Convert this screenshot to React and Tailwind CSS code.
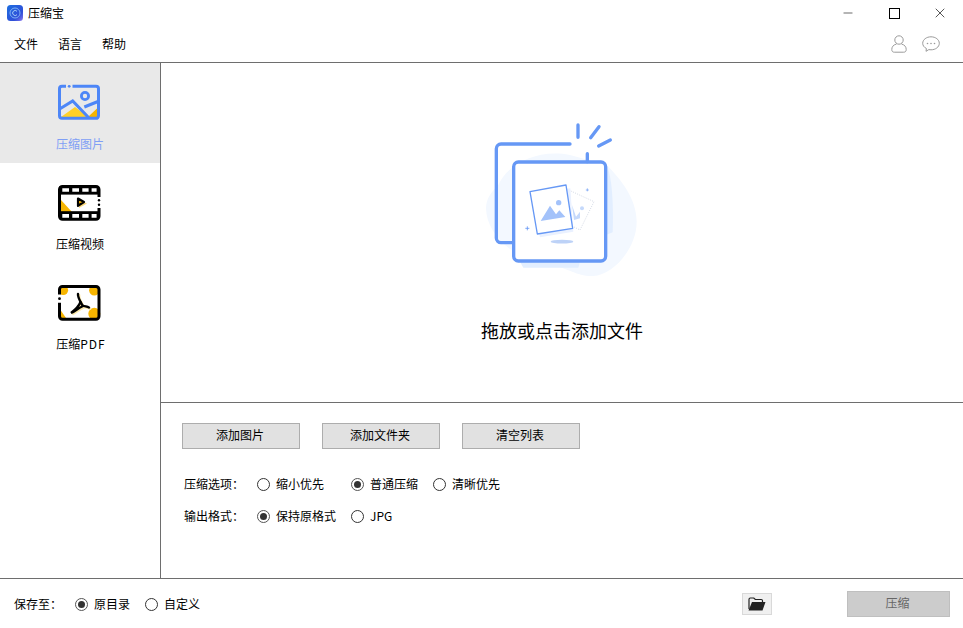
import { Minus, X } from 'lucide-react'

const FONT = "font-['Noto_Sans_CJK_SC','Noto_Sans',sans-serif]"

function AppLogo() {
  return (
    <svg width="16" height="16" viewBox="0 0 16 16">
      <defs>
        <linearGradient id="logo" x1="0" y1="0" x2="1" y2="1">
          <stop offset="0" stopColor="#1d6fe0" />
          <stop offset="0.7" stopColor="#2f4fd8" />
          <stop offset="1" stopColor="#8f7cf0" />
        </linearGradient>
      </defs>
      <rect width="16" height="16" rx="3.5" fill="url(#logo)" />
      <circle cx="8" cy="8" r="5" fill="none" stroke="#7fb2f5" strokeWidth="1" />
      <path d="M10 6.3a2.5 2.5 0 1 0 0 3.4" fill="none" stroke="#a9cdf8" strokeWidth="1" />
    </svg>
  )
}

function ImageIcon() {
  return (
    <svg width="44" height="37" viewBox="0 0 44 37">
      <path d="M3 33 L17 23 L30.300 33 Z" fill="#ffd02a" />
      <path d="M31 32 L39 24.500 V33.300 H31 Z" fill="#f5b400" />
      <path d="M8 2.300H4a2.500 2.500 0 0 0-2.500 2.500v27a2.500 2.500 0 0 0 2.500 2.500h34a2.500 2.500 0 0 0 2.500-2.500v-27a2.500 2.500 0 0 0-2.500-2.500H14.500" fill="none" stroke="#4d86f7" strokeWidth="3" />
      <circle cx="11.200" cy="2.300" r="1.400" fill="#4d86f7" />
      <circle cx="27" cy="12" r="3.600" fill="none" stroke="#4d86f7" strokeWidth="2.800" />
      <path d="M2 24.700 L14.700 17 L31 34" fill="none" stroke="#4d86f7" strokeWidth="3" />
      <path d="M26.300 23 L40 17.500" fill="none" stroke="#4d86f7" strokeWidth="3" />
    </svg>
  )
}

function VideoIcon() {
  return (
    <svg width="44" height="37" viewBox="0 0 44 37">
      <path d="M3 16 L14 28 H3 Z" fill="#f7b500" />
      <path d="M41 13V5.400a3 3 0 0 0-3-3H4.500a3 3 0 0 0-3 3v26.900a3 3 0 0 0 3 3H38a3 3 0 0 0 3-3V24" fill="none" stroke="#000" strokeWidth="3" />
      <rect x="1.500" y="2" width="39.500" height="8.600" fill="#000" />
      <rect x="1.500" y="27.200" width="39.500" height="8" fill="#000" />
      <path d="M4.300 4.300h6.700v3.400H4.300z M14.300 4.300h6.700v3.400h-6.700z M24.300 4.300h6.300v3.400h-6.300z M33.600 4.300h5v3.400h-5z M4.300 30h6.700v3.700H4.300z M14.300 30h6.700v3.700h-6.700z M24.300 30h6.300v3.700h-6.300z M33.600 30h5v3.700h-5z" fill="#fff" />
      <path d="M21 16 L29 19.500 L21 24Z" fill="#fbd87a" />
      <path d="M20 14.500 L26 18 L20 21.800Z" fill="#f7b500" stroke="#000" strokeWidth="2.200" strokeLinejoin="round" />
      <circle cx="41" cy="16.300" r="1.200" fill="#000" />
      <circle cx="41" cy="20.700" r="1.200" fill="#000" />
    </svg>
  )
}

function PdfIcon() {
  return (
    <svg width="44" height="37" viewBox="0 0 44 37">
      <circle cx="5.300" cy="6.300" r="4.800" fill="#f7b500" />
      <circle cx="36.300" cy="6.300" r="5.200" fill="#f7b500" />
      <circle cx="36.300" cy="29.700" r="6" fill="#f7b500" />
      <path d="M2.500 26 L8 34 H2.500 Z" fill="#f7b500" />
      <path d="M1.500 10.500V5.400a3 3 0 0 1 3-3H38a3 3 0 0 1 3 3v26.900a3 3 0 0 1-3 3H4.500a3 3 0 0 1-3-3V18.700" fill="none" stroke="#000" strokeWidth="3" />
      <circle cx="1.500" cy="14.700" r="1.400" fill="#000" />
      <g fill="none" strokeLinecap="round" strokeWidth="2.400">
        <g stroke="#fce9a9" transform="translate(1.200 1.200)">
          <path d="M20 10C19.500 13 22 17 24.500 21.500 27 22.500 29 22.500 31 23.500" />
          <path d="M22.500 18C21 22 17 26 13 29 17 27 20 24.500 25 22" />
        </g>
        <g stroke="#000">
          <path d="M20 10C19.500 13 22 17 24.500 21.500 27 22.500 29 22.500 31 23.500" />
          <path d="M22.500 18C21 22 17 26 13 29 17 27 20 24.500 25 22" />
        </g>
      </g>
    </svg>
  )
}

function HeroArt() {
  return (
    <svg className="w-[180px] h-[170px]" viewBox="6 0 540 510">
      <path d="M85 210 C110 150 200 100 300 120 L410 150 C450 190 500 250 500 320 C500 400 430 480 370 483 C320 485 300 460 240 450 C150 440 50 370 48 280 C48 250 65 230 85 210Z" fill="#f3f8ff" />
      <path d="M412 155 C430 200 430 300 428 352 L408 360 L400 420 L330 440 L325 458 L160 458 L150 440 L400 435Z" fill="#e2eeff" />
      <path d="M300 87H93a14 14 0 0 0-14 14v268a14 14 0 0 0 14 14h36" fill="none" stroke="#6698f5" strokeWidth="10" strokeLinecap="round" />
      <rect x="131" y="141" width="276" height="297" rx="14" fill="#fff" stroke="#6698f5" strokeWidth="10" />
      <path d="M352 116V140 M324 30V67 M362 68L387 35 M386 93L421 75" stroke="#6698f5" strokeWidth="10" strokeLinecap="round" />
      <path d="M296 225 L372 260 L330 345 L300 330Z" fill="#fff" stroke="#bcc6d6" strokeWidth="2" strokeDasharray="3 4" />
      <path d="M306 270 L318 305 L330 290 L330 310 L312 315Z" fill="#c5d9fb" />
      <circle cx="336" cy="280" r="6" fill="#c5d9fb" />
      <path d="M205 362 L305 345 L296 215 L181 232Z" fill="#eaf1ff" transform="translate(5 5)" />
      <path d="M180 230 L288 210 L308 340 L202 357Z" fill="#fff" stroke="#6698f5" strokeWidth="4" strokeLinejoin="round" />
      <path d="M212 318 L240 272 L258 298 L268 286 L286 306Z" fill="#a3c2fa" />
      <circle cx="266" cy="263" r="8" fill="#a3c2fa" />
      <ellipse cx="276" cy="380" rx="34" ry="5.500" fill="#bdd2f7" />
      <path d="M172 334V346 M166 340H178" stroke="#6698f5" strokeWidth="2.500" />
      <path d="M352 220V229 M347.500 225H356.500" stroke="#6698f5" strokeWidth="2" />
    </svg>
  )
}

function Radio({ label, checked }) {
  return (
    <span className="flex items-center">
      <span className={`w-[13px] h-[13px] rounded-full border bg-white flex items-center justify-center shrink-0 ${checked ? 'border-[#555]' : 'border-[#333]'}`}>
        {checked && <span className="w-[7px] h-[7px] rounded-full bg-[#333]" />}
      </span>
      <span className="ml-[6px] text-xs text-black whitespace-nowrap">{label}</span>
    </span>
  )
}

function ActionButton({ children }) {
  return (
    <button type="button" className="w-[118px] h-[26px] pr-[2px] pb-[2px] bg-[#e1e1e1] border border-[#adadad] text-xs text-black">
      {children}
    </button>
  )
}

const NAV = [
  { label: '压缩图片', Icon: ImageIcon, active: true },
  { label: '压缩视频', Icon: VideoIcon },
  { label: <span className="pl-[2px]">压缩<span className="tracking-[1px]">PDF</span></span>, Icon: PdfIcon },
]

export default function App() {
  return (
    <div className={`w-[963px] h-[628px] bg-white flex flex-col overflow-hidden ${FONT}`}>
      {/* title bar */}
      <div className="h-[26px] flex items-center pl-[7px] shrink-0">
        <AppLogo />
        <span className="ml-[5px] text-xs text-black">压缩宝</span>
        <div className="ml-auto flex items-center text-black">
          <span className="w-[46px] flex justify-center"><Minus size={14} strokeWidth={1} /></span>
          <span className="w-[46px] flex justify-center">
            <span className="w-[11px] h-[11px] border border-black" />
          </span>
          <span className="w-[46px] flex justify-center"><X size={16} strokeWidth={1} /></span>
        </div>
      </div>

      {/* menu row */}
      <div className="h-[36px] border-b border-[#6e6e6e] flex items-center pl-[14px] pr-[23px] gap-5 text-xs text-black shrink-0 box-content">
        <span>文件</span>
        <span>语言</span>
        <span>帮助</span>
        <div className="ml-auto flex items-center gap-[15px]">
          <svg width="16" height="18" viewBox="0 0 16 18" fill="none" stroke="#9a9a9a" strokeWidth="1">
            <circle cx="8" cy="5" r="4.200" />
            <path d="M5.500 9C2 10 .8 12 .8 14.500c0 2 1 2.700 2.500 2.700h9.400c1.500 0 2.500-.7 2.500-2.700 0-2.500-1.200-4.500-4.700-5.500" />
          </svg>
          <svg width="18" height="16" viewBox="0 0 18 16" fill="none" stroke="#9a9a9a" strokeWidth="1">
            <path d="M9 .8c4.500 0 8.300 2.800 8.300 6.500s-3.800 6.500-8.300 6.500c-.8 0-1.500-.1-2.200-.2L4 15.300l.4-2.800C2 11.300.7 9.400.7 7.300.7 3.600 4.500.8 9 .8z" />
            <circle cx="5.500" cy="7.500" r=".8" fill="#9a9a9a" stroke="none" />
            <circle cx="9" cy="7.500" r=".8" fill="#9a9a9a" stroke="none" />
            <circle cx="12.500" cy="7.500" r=".8" fill="#9a9a9a" stroke="none" />
          </svg>
        </div>
      </div>

      {/* body */}
      <div className="flex flex-1 min-h-0">
        <div className="w-[161px] border-r border-[#6e6e6e] shrink-0">
          {NAV.map(({ label, Icon, active }, i) => (
            <div key={i} className={`h-[100px] flex flex-col items-center pt-[21px] ${active ? 'bg-[#e9e9e9]' : ''}`}>
              <Icon />
              <span className={`mt-[15px] text-xs ${active ? 'text-[#7f9ff5]' : 'text-black'}`}>{label}</span>
            </div>
          ))}
        </div>

        <div className="flex-1 flex flex-col min-w-0">
          {/* drop zone */}
          <div className="h-[340px] border-b border-[#6e6e6e] flex flex-col items-center pt-[52px] shrink-0">
            <HeroArt />
            <span className="mt-[32px] text-[18px] leading-[26px] text-black">拖放或点击添加文件</span>
          </div>

          {/* options */}
          <div className="flex-1 pl-[21px] pt-[20px]">
            <div className="flex gap-[22px]">
              <ActionButton>添加图片</ActionButton>
              <ActionButton>添加文件夹</ActionButton>
              <ActionButton>清空列表</ActionButton>
            </div>
            <div className="flex items-center h-[18px] mt-[26px] pl-[2px]">
              <span className="w-[73px] text-xs text-black">压缩选项：</span>
              <span className="w-[94px]"><Radio label="缩小优先" /></span>
              <span className="w-[82px]"><Radio label="普通压缩" checked /></span>
              <Radio label="清晰优先" />
            </div>
            <div className="flex items-center h-[18px] mt-[14px] pl-[2px]">
              <span className="w-[73px] text-xs text-black">输出格式：</span>
              <span className="w-[94px]"><Radio label="保持原格式" checked /></span>
              <Radio label="JPG" />
            </div>
          </div>
        </div>
      </div>

      {/* footer */}
      <div className="h-[50px] border-t border-[#6e6e6e] flex items-center pl-[14px] pr-[13px] shrink-0">
        <span className="w-[61px] mt-[1px] text-xs text-black">保存至：</span>
        <span className="w-[70px] mt-[1px]"><Radio label="原目录" checked /></span>
        <span className="mt-[1px]"><Radio label="自定义" /></span>
        <button type="button" className="ml-auto w-[30px] h-[22px] bg-[#f0f0f0] border border-[#d9d9d9] flex items-center justify-center">
          <svg width="18" height="14" viewBox="0 0 18 14">
            <path d="M1 12V2.500C1 1.700 1.500 1 2.300 1h3.500l1.500 1.500h6c.7 0 1.200.5 1.200 1.200V5" fill="none" stroke="#222" strokeWidth="1.200" />
            <path d="M4 5h13.500l-3 8.500H.5z" fill="#222" />
          </svg>
        </button>
        <button type="button" className="ml-[75px] w-[103px] h-[26px] pr-[2px] pb-[2px] bg-[#cccccc] border border-[#bfbfbf] text-xs text-[#666]">
          压缩
        </button>
      </div>
    </div>
  )
}
